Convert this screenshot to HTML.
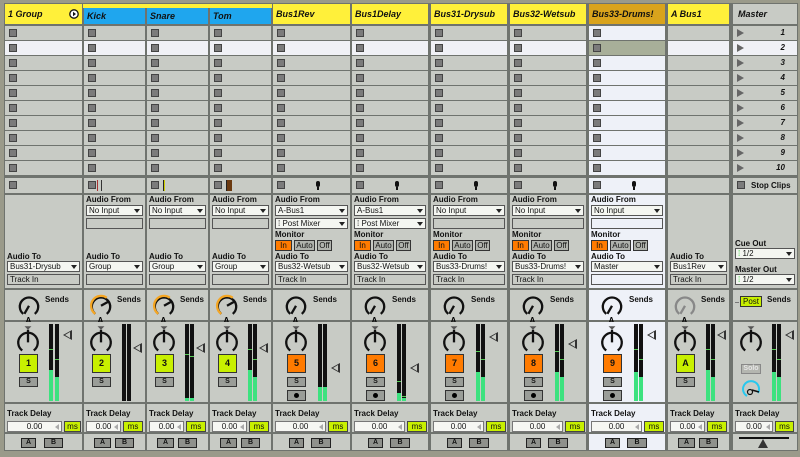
<!DOCTYPE html>
<html><head><meta charset="utf-8"><style>
*{margin:0;padding:0;box-sizing:border-box}
body{width:800px;height:457px;background:#9a9a8a;position:relative;overflow:hidden;font-family:"Liberation Sans",sans-serif;color:#111}
#bg{position:absolute;left:4px;top:3px;width:794px;height:448px;background:#6f736e}
.col{position:absolute;top:0;height:451px}
.s{position:absolute;left:0;right:0;background:#c8cbc5}
.lt .s,.lt .r{background:#eef1f8}
.hd{position:absolute;top:4px;left:0;right:0;height:20px;font:italic bold 9px/20px "Liberation Sans",sans-serif;padding-left:3px;background:#fff03a}
.clips{position:absolute;top:26px;left:0;right:0}
.r{height:14px;margin-bottom:1px;background:#c8cbc5;position:relative}
.r.w{background:#f0f1f6}
.q{position:absolute;left:4px;top:3px;width:8px;height:8px;background:#7b7b7b;border:1px solid #444}
.st{top:178px;height:15px}
.io{top:195px;height:93px}
.snd{top:290px;height:30px}
.mx{top:322px;height:80px}
.dl{top:404px;height:28px}
.ab{top:434px;height:16px}
.lb{position:absolute;left:2px;font:bold 8px/9px "Liberation Sans",sans-serif}
.dd{position:absolute;left:2px;right:2px;height:11px;background:#f4f6f1;border:1px solid #555;font:8px/9px "Liberation Sans",sans-serif;padding-left:2px;white-space:nowrap;overflow:hidden}
.dd:after{content:"";position:absolute;right:2px;top:3px;border:3px solid transparent;border-top:4px solid #222}
.bx{position:absolute;left:2px;right:2px;height:11px;border:1px solid #555;background:#c8cbc5;font:8px/9px "Liberation Sans",sans-serif;padding-left:2px}
.lt .bx{background:#eef1f8}
.mb{position:absolute;top:45px;height:11px;border:1px solid #333;background:#b0b3ad;font:8px/9px "Liberation Sans",sans-serif;text-align:center}
.mb.o{background:#ff7b00}
.kn{position:absolute;top:2px}
.snd svg.kn,.mx svg.kn{transform:scale(1.15);transform-origin:50% 0}
.sl{position:absolute;top:5px;font:bold 8px/9px "Liberation Sans",sans-serif}
.nb{position:absolute;top:32px;width:19px;height:19px;border:1px solid #333;font:bold 9px/17px "Liberation Sans",sans-serif;text-align:center;background:#c8f000}
.nb.o{background:#ff7b00}
.sb{position:absolute;top:55px;width:19px;height:10px;border:1px solid #333;background:#9a9d98;font:bold 7px/8px "Liberation Sans",sans-serif;text-align:center}
.rb{position:absolute;top:68px;width:19px;height:11px;border:1px solid #333;background:#9a9d98}
.rb:after{content:"";position:absolute;left:6px;top:2px;width:5px;height:5px;border-radius:50%;background:#000}
.m{position:absolute;top:2px;width:4px;height:77px;background:#111}
.m b{position:absolute;bottom:0;left:0;right:0;background:#3de27f}
.m i{position:absolute;left:0;right:0;height:1px;background:#5c5}
.tri{position:absolute;width:0;height:0;border-top:5px solid transparent;border-bottom:5px solid transparent;border-right:9px solid #333}
.tri:after{content:"";position:absolute;left:2px;top:-3px;border-top:3px solid transparent;border-bottom:3px solid transparent;border-right:5px solid #c8cbc5}
.lt .tri:after{border-right-color:#eef1f8}
.di{position:absolute;top:17px;left:2px;height:11px;background:#f6f7f3;border:1px solid #777;font:8px/9px "Liberation Sans",sans-serif;text-align:center}
.di:after{content:"";position:absolute;right:2px;top:2px;border-top:3px solid transparent;border-bottom:3px solid transparent;border-right:4px solid #aaa}
.ms{position:absolute;top:17px;height:11px;background:#c8f000;border:1px solid #444;font:8px/9px "Liberation Sans",sans-serif;text-align:center}
.a,.b{position:absolute;top:4px;height:10px;border:1px solid #222;background:#8f918c;font:bold 7px/8px "Liberation Sans",sans-serif;text-align:center}
.mic{position:absolute;top:3px;width:4px;height:6px;border-radius:2px;background:#111}
.mic:after{content:"";position:absolute;left:1px;top:6px;width:2px;height:3px;background:#111}
.mt{position:absolute;left:4px;top:3px;border-top:4px solid transparent;border-bottom:4px solid transparent;border-left:7px solid #666}
.mn{position:absolute;right:12px;top:0;font:italic bold 8px/14px "Liberation Sans",sans-serif}
</style></head><body>
<div id="bg"></div>
<div style="position:absolute;left:83px;top:4px;width:189px;height:4px;background:#fff03a"></div>

<div class="col" style="left:5px;width:77px">
<div class="hd">1 Group<svg style="position:absolute;right:3px;top:5px" width="10" height="10"><circle cx="5" cy="5" r="4.2" fill="#fff" stroke="#111" stroke-width="1.3"/><path d="M4 2.8L7 5 4 7.2z" fill="#111"/></svg></div>
<div class="clips"><div class="r"><i class="q"></i></div><div class="r w"><i class="q"></i></div><div class="r"><i class="q"></i></div><div class="r"><i class="q"></i></div><div class="r"><i class="q"></i></div><div class="r"><i class="q"></i></div><div class="r"><i class="q"></i></div><div class="r"><i class="q"></i></div><div class="r"><i class="q"></i></div><div class="r"><i class="q"></i></div></div>
<div class="s st"><i class="q"></i></div>
<div class="s io"><div class="lb" style="top:57px">Audio To</div><div class="dd" style="top:66px">Bus31-Drysub</div><div class="bx" style="top:79px">Track In</div></div>
<div class="s snd"><svg class="kn" style="left:12px" width="24" height="28"><path d="M7 19A8 8 0 1 1 17 19" fill="none" stroke="#111" stroke-width="2"/><line x1="12" y1="12" x2="8" y2="19" stroke="#111" stroke-width="2"/><text x="9" y="27" font-size="7" font-weight="bold" font-family="Liberation Sans">A</text></svg><div class="sl" style="left:40px">Sends</div></div>
<div class="s mx"><svg class="kn" style="left:12px" width="22" height="26"><path d="M8 2h6l-3 3z" fill="#555"/><path d="M6 23A8.5 8.5 0 1 1 16 23" fill="none" stroke="#111" stroke-width="2"/><line x1="11" y1="5" x2="11" y2="16" stroke="#111" stroke-width="2"/></svg>
<div class="nb" style="left:14px">1</div><div class="sb" style="left:14px">S</div>
<div class="m" style="left:44px"><i style="top:25px"></i><b style="height:31px"></b></div><div class="m" style="left:50px"><i style="top:35px"></i><b style="height:24px"></b></div><div class="tri" style="left:58px;top:8px"></div></div>
<div class="s dl"><div class="lb" style="top:5px">Track Delay</div><div class="di" style="width:55px">0.00</div><div class="ms" style="left:59px;width:17px">ms</div></div>
<div class="s ab"><div class="a" style="left:16px;width:15px">A</div><div class="b" style="left:39px;width:19px">B</div></div>
</div>

<div class="col" style="left:84px;width:61px">
<div class="hd" style="top:8px;height:16px;line-height:16px;background:#1fa6ee">Kick</div>
<div class="clips"><div class="r"><i class="q"></i></div><div class="r w"><i class="q"></i></div><div class="r"><i class="q"></i></div><div class="r"><i class="q"></i></div><div class="r"><i class="q"></i></div><div class="r"><i class="q"></i></div><div class="r"><i class="q"></i></div><div class="r"><i class="q"></i></div><div class="r"><i class="q"></i></div><div class="r"><i class="q"></i></div></div>
<div class="s st"><i class="q"></i><div style="position:absolute;left:13px;top:2px;width:5px;height:11px;border-left:1px solid #a33;border-right:1px solid #333"></div></div>
<div class="s io"><div class="lb" style="top:0">Audio From</div><div class="dd" style="top:10px">No Input</div><div class="bx" style="top:23px"></div><div class="lb" style="top:57px">Audio To</div><div class="dd" style="top:66px">Group</div><div class="bx" style="top:79px"></div></div>
<div class="s snd"><svg class="kn" style="left:5px" width="24" height="28"><path d="M7 19A8 8 0 1 1 17 19" fill="none" stroke="#111" stroke-width="2"/><path d="M7 19A8 8 0 0 1 17 5" fill="none" stroke="#f5a623" stroke-width="2"/><line x1="12" y1="12" x2="19" y2="8" stroke="#111" stroke-width="2"/><text x="9" y="27" font-size="7" font-weight="bold" font-family="Liberation Sans">A</text></svg><div class="sl" style="left:33px">Sends</div></div>
<div class="s mx"><svg class="kn" style="left:6px" width="22" height="26"><path d="M8 2h6l-3 3z" fill="#555"/><path d="M6 23A8.5 8.5 0 1 1 16 23" fill="none" stroke="#111" stroke-width="2"/><line x1="11" y1="5" x2="11" y2="16" stroke="#111" stroke-width="2"/></svg>
<div class="nb" style="left:8px">2</div><div class="sb" style="left:8px">S</div>
<div class="m" style="left:38px"></div><div class="m" style="left:43px"></div><div class="tri" style="left:49px;top:21px"></div></div>
<div class="s dl"><div class="lb" style="top:5px">Track Delay</div><div class="di" style="width:35px">0.00</div><div class="ms" style="left:39px;width:20px">ms</div></div>
<div class="s ab"><div class="a" style="left:10px;width:17px">A</div><div class="b" style="left:31px;width:19px">B</div></div>
</div>

<div class="col" style="left:147px;width:61px">
<div class="hd" style="top:8px;height:16px;line-height:16px;background:#1fa6ee">Snare</div>
<div class="clips"><div class="r"><i class="q"></i></div><div class="r w"><i class="q"></i></div><div class="r"><i class="q"></i></div><div class="r"><i class="q"></i></div><div class="r"><i class="q"></i></div><div class="r"><i class="q"></i></div><div class="r"><i class="q"></i></div><div class="r"><i class="q"></i></div><div class="r"><i class="q"></i></div><div class="r"><i class="q"></i></div></div>
<div class="s st"><i class="q"></i><div style="position:absolute;left:16px;top:2px;width:2px;height:11px;background:#222;border-right:1px solid #cc0"></div></div>
<div class="s io"><div class="lb" style="top:0">Audio From</div><div class="dd" style="top:10px">No Input</div><div class="bx" style="top:23px"></div><div class="lb" style="top:57px">Audio To</div><div class="dd" style="top:66px">Group</div><div class="bx" style="top:79px"></div></div>
<div class="s snd"><svg class="kn" style="left:5px" width="24" height="28"><path d="M7 19A8 8 0 1 1 17 19" fill="none" stroke="#111" stroke-width="2"/><path d="M7 19A8 8 0 0 1 17 5" fill="none" stroke="#f5a623" stroke-width="2"/><line x1="12" y1="12" x2="19" y2="8" stroke="#111" stroke-width="2"/><text x="9" y="27" font-size="7" font-weight="bold" font-family="Liberation Sans">A</text></svg><div class="sl" style="left:33px">Sends</div></div>
<div class="s mx"><svg class="kn" style="left:6px" width="22" height="26"><path d="M8 2h6l-3 3z" fill="#555"/><path d="M6 23A8.5 8.5 0 1 1 16 23" fill="none" stroke="#111" stroke-width="2"/><line x1="11" y1="5" x2="11" y2="16" stroke="#111" stroke-width="2"/></svg>
<div class="nb" style="left:8px">3</div><div class="sb" style="left:8px">S</div>
<div class="m" style="left:38px"><i style="top:30px"></i><b style="height:3px"></b></div><div class="m" style="left:43px"><i style="top:32px"></i><b style="height:3px"></b></div><div class="tri" style="left:49px;top:21px"></div></div>
<div class="s dl"><div class="lb" style="top:5px">Track Delay</div><div class="di" style="width:35px">0.00</div><div class="ms" style="left:39px;width:20px">ms</div></div>
<div class="s ab"><div class="a" style="left:10px;width:17px">A</div><div class="b" style="left:31px;width:19px">B</div></div>
</div>

<div class="col" style="left:210px;width:61px">
<div class="hd" style="top:8px;height:16px;line-height:16px;background:#1fa6ee">Tom</div>
<div class="clips"><div class="r"><i class="q"></i></div><div class="r w"><i class="q"></i></div><div class="r"><i class="q"></i></div><div class="r"><i class="q"></i></div><div class="r"><i class="q"></i></div><div class="r"><i class="q"></i></div><div class="r"><i class="q"></i></div><div class="r"><i class="q"></i></div><div class="r"><i class="q"></i></div><div class="r"><i class="q"></i></div></div>
<div class="s st"><i class="q"></i><div style="position:absolute;left:16px;top:2px;width:6px;height:11px;background:#6b3a10;border-left:1px solid #222"></div></div>
<div class="s io"><div class="lb" style="top:0">Audio From</div><div class="dd" style="top:10px">No Input</div><div class="bx" style="top:23px"></div><div class="lb" style="top:57px">Audio To</div><div class="dd" style="top:66px">Group</div><div class="bx" style="top:79px"></div></div>
<div class="s snd"><svg class="kn" style="left:5px" width="24" height="28"><path d="M7 19A8 8 0 1 1 17 19" fill="none" stroke="#111" stroke-width="2"/><path d="M7 19A8 8 0 0 1 17 5" fill="none" stroke="#f5a623" stroke-width="2"/><line x1="12" y1="12" x2="19" y2="8" stroke="#111" stroke-width="2"/><text x="9" y="27" font-size="7" font-weight="bold" font-family="Liberation Sans">A</text></svg><div class="sl" style="left:33px">Sends</div></div>
<div class="s mx"><svg class="kn" style="left:6px" width="22" height="26"><path d="M8 2h6l-3 3z" fill="#555"/><path d="M6 23A8.5 8.5 0 1 1 16 23" fill="none" stroke="#111" stroke-width="2"/><line x1="11" y1="5" x2="11" y2="16" stroke="#111" stroke-width="2"/></svg>
<div class="nb" style="left:8px">4</div><div class="sb" style="left:8px">S</div>
<div class="m" style="left:38px"><i style="top:25px"></i><b style="height:31px"></b></div><div class="m" style="left:43px"><i style="top:35px"></i><b style="height:24px"></b></div><div class="tri" style="left:49px;top:21px"></div></div>
<div class="s dl"><div class="lb" style="top:5px">Track Delay</div><div class="di" style="width:35px">0.00</div><div class="ms" style="left:39px;width:20px">ms</div></div>
<div class="s ab"><div class="a" style="left:10px;width:17px">A</div><div class="b" style="left:31px;width:19px">B</div></div>
</div>

<div class="col" style="left:273px;width:77px">
<div class="hd">Bus1Rev</div>
<div class="clips"><div class="r"><i class="q"></i></div><div class="r w"><i class="q"></i></div><div class="r"><i class="q"></i></div><div class="r"><i class="q"></i></div><div class="r"><i class="q"></i></div><div class="r"><i class="q"></i></div><div class="r"><i class="q"></i></div><div class="r"><i class="q"></i></div><div class="r"><i class="q"></i></div><div class="r"><i class="q"></i></div></div>
<div class="s st"><i class="q"></i><i class="mic" style="left:43px"></i></div>
<div class="s io"><div class="lb" style="top:0">Audio From</div><div class="dd" style="top:10px">A-Bus1</div><div class="dd" style="top:23px">⁞ Post Mixer</div><div class="lb" style="top:35px">Monitor</div><div class="mb o" style="left:2px;width:17px">In</div><div class="mb" style="left:21px;width:21px">Auto</div><div class="mb" style="left:44px;width:15px">Off</div><div class="lb" style="top:57px">Audio To</div><div class="dd" style="top:66px">Bus32-Wetsub</div><div class="bx" style="top:79px">Track In</div></div>
<div class="s snd"><svg class="kn" style="left:11px" width="24" height="28"><path d="M7 19A8 8 0 1 1 17 19" fill="none" stroke="#111" stroke-width="2"/><line x1="12" y1="12" x2="8" y2="19" stroke="#111" stroke-width="2"/><text x="9" y="27" font-size="7" font-weight="bold" font-family="Liberation Sans">A</text></svg><div class="sl" style="left:40px">Sends</div></div>
<div class="s mx"><svg class="kn" style="left:12px" width="22" height="26"><path d="M8 2h6l-3 3z" fill="#555"/><path d="M6 23A8.5 8.5 0 1 1 16 23" fill="none" stroke="#111" stroke-width="2"/><line x1="11" y1="5" x2="11" y2="16" stroke="#111" stroke-width="2"/></svg>
<div class="nb o" style="left:14px">5</div><div class="sb" style="left:14px">S</div><div class="rb" style="left:14px"></div>
<div class="m" style="left:45px"><b style="height:14px"></b></div><div class="m" style="left:50px"><b style="height:14px"></b></div><div class="tri" style="left:58px;top:41px"></div></div>
<div class="s dl"><div class="lb" style="top:5px">Track Delay</div><div class="di" style="width:51px">0.00</div><div class="ms" style="left:55px;width:20px">ms</div></div>
<div class="s ab"><div class="a" style="left:16px;width:15px">A</div><div class="b" style="left:38px;width:20px">B</div></div>
</div>

<div class="col" style="left:352px;width:76px">
<div class="hd">Bus1Delay</div>
<div class="clips"><div class="r"><i class="q"></i></div><div class="r w"><i class="q"></i></div><div class="r"><i class="q"></i></div><div class="r"><i class="q"></i></div><div class="r"><i class="q"></i></div><div class="r"><i class="q"></i></div><div class="r"><i class="q"></i></div><div class="r"><i class="q"></i></div><div class="r"><i class="q"></i></div><div class="r"><i class="q"></i></div></div>
<div class="s st"><i class="q"></i><i class="mic" style="left:43px"></i></div>
<div class="s io"><div class="lb" style="top:0">Audio From</div><div class="dd" style="top:10px">A-Bus1</div><div class="dd" style="top:23px">⁞ Post Mixer</div><div class="lb" style="top:35px">Monitor</div><div class="mb o" style="left:2px;width:17px">In</div><div class="mb" style="left:21px;width:21px">Auto</div><div class="mb" style="left:44px;width:15px">Off</div><div class="lb" style="top:57px">Audio To</div><div class="dd" style="top:66px">Bus32-Wetsub</div><div class="bx" style="top:79px">Track In</div></div>
<div class="s snd"><svg class="kn" style="left:11px" width="24" height="28"><path d="M7 19A8 8 0 1 1 17 19" fill="none" stroke="#111" stroke-width="2"/><line x1="12" y1="12" x2="8" y2="19" stroke="#111" stroke-width="2"/><text x="9" y="27" font-size="7" font-weight="bold" font-family="Liberation Sans">A</text></svg><div class="sl" style="left:40px">Sends</div></div>
<div class="s mx"><svg class="kn" style="left:12px" width="22" height="26"><path d="M8 2h6l-3 3z" fill="#555"/><path d="M6 23A8.5 8.5 0 1 1 16 23" fill="none" stroke="#111" stroke-width="2"/><line x1="11" y1="5" x2="11" y2="16" stroke="#111" stroke-width="2"/></svg>
<div class="nb o" style="left:14px">6</div><div class="sb" style="left:14px">S</div><div class="rb" style="left:14px"></div>
<div class="m" style="left:45px"><i style="top:57px"></i><b style="height:8px"></b></div><div class="m" style="left:50px"><i style="top:72px"></i><b style="height:3px"></b></div><div class="tri" style="left:58px;top:41px"></div></div>
<div class="s dl"><div class="lb" style="top:5px">Track Delay</div><div class="di" style="width:51px">0.00</div><div class="ms" style="left:55px;width:20px">ms</div></div>
<div class="s ab"><div class="a" style="left:16px;width:15px">A</div><div class="b" style="left:38px;width:20px">B</div></div>
</div>

<div class="col" style="left:431px;width:76px">
<div class="hd">Bus31-Drysub</div>
<div class="clips"><div class="r"><i class="q"></i></div><div class="r w"><i class="q"></i></div><div class="r"><i class="q"></i></div><div class="r"><i class="q"></i></div><div class="r"><i class="q"></i></div><div class="r"><i class="q"></i></div><div class="r"><i class="q"></i></div><div class="r"><i class="q"></i></div><div class="r"><i class="q"></i></div><div class="r"><i class="q"></i></div></div>
<div class="s st"><i class="q"></i><i class="mic" style="left:43px"></i></div>
<div class="s io"><div class="lb" style="top:0">Audio From</div><div class="dd" style="top:10px">No Input</div><div class="bx" style="top:23px"></div><div class="lb" style="top:35px">Monitor</div><div class="mb o" style="left:2px;width:17px">In</div><div class="mb" style="left:21px;width:21px">Auto</div><div class="mb" style="left:44px;width:15px">Off</div><div class="lb" style="top:57px">Audio To</div><div class="dd" style="top:66px">Bus33-Drums!</div><div class="bx" style="top:79px">Track In</div></div>
<div class="s snd"><svg class="kn" style="left:11px" width="24" height="28"><path d="M7 19A8 8 0 1 1 17 19" fill="none" stroke="#111" stroke-width="2"/><line x1="12" y1="12" x2="8" y2="19" stroke="#111" stroke-width="2"/><text x="9" y="27" font-size="7" font-weight="bold" font-family="Liberation Sans">A</text></svg><div class="sl" style="left:40px">Sends</div></div>
<div class="s mx"><svg class="kn" style="left:12px" width="22" height="26"><path d="M8 2h6l-3 3z" fill="#555"/><path d="M6 23A8.5 8.5 0 1 1 16 23" fill="none" stroke="#111" stroke-width="2"/><line x1="11" y1="5" x2="11" y2="16" stroke="#111" stroke-width="2"/></svg>
<div class="nb o" style="left:14px">7</div><div class="sb" style="left:14px">S</div><div class="rb" style="left:14px"></div>
<div class="m" style="left:45px"><i style="top:27px"></i><b style="height:29px"></b></div><div class="m" style="left:50px"><i style="top:35px"></i><b style="height:24px"></b></div><div class="tri" style="left:58px;top:10px"></div></div>
<div class="s dl"><div class="lb" style="top:5px">Track Delay</div><div class="di" style="width:51px">0.00</div><div class="ms" style="left:55px;width:20px">ms</div></div>
<div class="s ab"><div class="a" style="left:16px;width:15px">A</div><div class="b" style="left:38px;width:20px">B</div></div>
</div>

<div class="col" style="left:510px;width:76px">
<div class="hd">Bus32-Wetsub</div>
<div class="clips"><div class="r"><i class="q"></i></div><div class="r w"><i class="q"></i></div><div class="r"><i class="q"></i></div><div class="r"><i class="q"></i></div><div class="r"><i class="q"></i></div><div class="r"><i class="q"></i></div><div class="r"><i class="q"></i></div><div class="r"><i class="q"></i></div><div class="r"><i class="q"></i></div><div class="r"><i class="q"></i></div></div>
<div class="s st"><i class="q"></i><i class="mic" style="left:43px"></i></div>
<div class="s io"><div class="lb" style="top:0">Audio From</div><div class="dd" style="top:10px">No Input</div><div class="bx" style="top:23px"></div><div class="lb" style="top:35px">Monitor</div><div class="mb o" style="left:2px;width:17px">In</div><div class="mb" style="left:21px;width:21px">Auto</div><div class="mb" style="left:44px;width:15px">Off</div><div class="lb" style="top:57px">Audio To</div><div class="dd" style="top:66px">Bus33-Drums!</div><div class="bx" style="top:79px">Track In</div></div>
<div class="s snd"><svg class="kn" style="left:11px" width="24" height="28"><path d="M7 19A8 8 0 1 1 17 19" fill="none" stroke="#111" stroke-width="2"/><line x1="12" y1="12" x2="8" y2="19" stroke="#111" stroke-width="2"/><text x="9" y="27" font-size="7" font-weight="bold" font-family="Liberation Sans">A</text></svg><div class="sl" style="left:40px">Sends</div></div>
<div class="s mx"><svg class="kn" style="left:12px" width="22" height="26"><path d="M8 2h6l-3 3z" fill="#555"/><path d="M6 23A8.5 8.5 0 1 1 16 23" fill="none" stroke="#111" stroke-width="2"/><line x1="11" y1="5" x2="11" y2="16" stroke="#111" stroke-width="2"/></svg>
<div class="nb o" style="left:14px">8</div><div class="sb" style="left:14px">S</div><div class="rb" style="left:14px"></div>
<div class="m" style="left:45px"><i style="top:27px"></i><b style="height:29px"></b></div><div class="m" style="left:50px"><i style="top:35px"></i><b style="height:24px"></b></div><div class="tri" style="left:58px;top:17px"></div></div>
<div class="s dl"><div class="lb" style="top:5px">Track Delay</div><div class="di" style="width:51px">0.00</div><div class="ms" style="left:55px;width:20px">ms</div></div>
<div class="s ab"><div class="a" style="left:16px;width:15px">A</div><div class="b" style="left:38px;width:20px">B</div></div>
</div>

<div class="col lt" style="left:589px;width:76px">
<div class="hd" style="background:#d9a31c">Bus33-Drums!</div>
<div class="clips"><div class="r"><i class="q"></i></div><div class="r" style="background:#a8af99"><i class="q"></i></div><div class="r"><i class="q"></i></div><div class="r"><i class="q"></i></div><div class="r"><i class="q"></i></div><div class="r"><i class="q"></i></div><div class="r"><i class="q"></i></div><div class="r"><i class="q"></i></div><div class="r"><i class="q"></i></div><div class="r"><i class="q"></i></div></div>
<div class="s st"><i class="q"></i><i class="mic" style="left:43px"></i></div>
<div class="s io"><div class="lb" style="top:0">Audio From</div><div class="dd" style="top:10px">No Input</div><div class="bx" style="top:23px"></div><div class="lb" style="top:35px">Monitor</div><div class="mb o" style="left:2px;width:17px">In</div><div class="mb" style="left:21px;width:21px">Auto</div><div class="mb" style="left:44px;width:15px">Off</div><div class="lb" style="top:57px">Audio To</div><div class="dd" style="top:66px">Master</div><div class="bx" style="top:79px"></div></div>
<div class="s snd"><svg class="kn" style="left:11px" width="24" height="28"><path d="M7 19A8 8 0 1 1 17 19" fill="none" stroke="#111" stroke-width="2"/><line x1="12" y1="12" x2="8" y2="19" stroke="#111" stroke-width="2"/><text x="9" y="27" font-size="7" font-weight="bold" font-family="Liberation Sans">A</text></svg><div class="sl" style="left:40px">Sends</div></div>
<div class="s mx"><svg class="kn" style="left:12px" width="22" height="26"><path d="M8 2h6l-3 3z" fill="#555"/><path d="M6 23A8.5 8.5 0 1 1 16 23" fill="none" stroke="#111" stroke-width="2"/><line x1="11" y1="5" x2="11" y2="16" stroke="#111" stroke-width="2"/></svg>
<div class="nb o" style="left:14px">9</div><div class="sb" style="left:14px">S</div><div class="rb" style="left:14px"></div>
<div class="m" style="left:45px"><i style="top:25px"></i><b style="height:29px"></b></div><div class="m" style="left:50px"><i style="top:35px"></i><b style="height:24px"></b></div><div class="tri" style="left:58px;top:8px"></div></div>
<div class="s dl"><div class="lb" style="top:5px">Track Delay</div><div class="di" style="width:51px">0.00</div><div class="ms" style="left:55px;width:20px">ms</div></div>
<div class="s ab"><div class="a" style="left:16px;width:15px">A</div><div class="b" style="left:38px;width:20px">B</div></div>
</div>

<div class="col" style="left:668px;width:61px">
<div class="hd">A Bus1</div>
<div class="clips"><div class="r"></div><div class="r w"></div><div class="r"></div><div class="r"></div><div class="r"></div><div class="r"></div><div class="r"></div><div class="r"></div><div class="r"></div><div class="r"></div></div>
<div class="s st"></div>
<div class="s io"><div class="lb" style="top:57px">Audio To</div><div class="dd" style="top:66px">Bus1Rev</div><div class="bx" style="top:79px">Track In</div></div>
<div class="s snd"><svg class="kn" style="left:5px" width="24" height="28"><path d="M7 19A8 8 0 1 1 17 19" fill="none" stroke="#888" stroke-width="2"/><line x1="12" y1="12" x2="8" y2="19" stroke="#888" stroke-width="2"/><text x="9" y="27" font-size="7" font-weight="bold" font-family="Liberation Sans">A</text></svg><div class="sl" style="left:33px">Sends</div></div>
<div class="s mx"><svg class="kn" style="left:6px" width="22" height="26"><path d="M8 2h6l-3 3z" fill="#555"/><path d="M6 23A8.5 8.5 0 1 1 16 23" fill="none" stroke="#111" stroke-width="2"/><line x1="11" y1="5" x2="11" y2="16" stroke="#111" stroke-width="2"/></svg>
<div class="nb" style="left:8px">A</div><div class="sb" style="left:8px">S</div>
<div class="m" style="left:38px"><i style="top:25px"></i><b style="height:31px"></b></div><div class="m" style="left:43px"><i style="top:35px"></i><b style="height:24px"></b></div><div class="tri" style="left:49px;top:8px"></div></div>
<div class="s dl"><div class="lb" style="top:5px">Track Delay</div><div class="di" style="width:35px">0.00</div><div class="ms" style="left:39px;width:20px">ms</div></div>
<div class="s ab"><div class="a" style="left:10px;width:17px">A</div><div class="b" style="left:31px;width:19px">B</div></div>
</div>

<div class="col" style="left:733px;width:64px">
<div class="hd" style="background:#c8cbc5;padding-left:5px">Master</div>
<div class="clips"><div class="r"><i class="mt"></i><span class="mn">1</span></div><div class="r w"><i class="mt"></i><span class="mn">2</span></div><div class="r"><i class="mt"></i><span class="mn">3</span></div><div class="r"><i class="mt"></i><span class="mn">4</span></div><div class="r"><i class="mt"></i><span class="mn">5</span></div><div class="r"><i class="mt"></i><span class="mn">6</span></div><div class="r"><i class="mt"></i><span class="mn">7</span></div><div class="r"><i class="mt"></i><span class="mn">8</span></div><div class="r"><i class="mt"></i><span class="mn">9</span></div><div class="r"><i class="mt"></i><span class="mn">10</span></div></div>
<div class="s st"><i class="q"></i><span style="position:absolute;left:18px;top:0;font:bold 8px/15px 'Liberation Sans',sans-serif">Stop Clips</span></div>
<div class="s io"><div class="lb" style="top:44px">Cue Out</div><div class="dd" style="top:53px"><span style="color:#3c3">⁞</span> 1/2</div><div class="lb" style="top:70px">Master Out</div><div class="dd" style="top:79px"><span style="color:#3c3">⁞</span> 1/2</div></div>
<div class="s snd"><div style="position:absolute;left:2px;top:12px;width:4px;height:1px;background:#777"></div><div style="position:absolute;left:7px;top:6px;width:22px;height:11px;background:#c8f000;border:1px solid #333;font:8px/9px 'Liberation Sans',sans-serif;text-align:center">Post</div><div class="sl" style="left:34px">Sends</div></div>
<div class="s mx"><svg class="kn" style="left:7px" width="22" height="26"><path d="M8 2h6l-3 3z" fill="#555"/><path d="M6 23A8.5 8.5 0 1 1 16 23" fill="none" stroke="#111" stroke-width="2"/><line x1="11" y1="5" x2="11" y2="16" stroke="#111" stroke-width="2"/></svg>
<div style="position:absolute;left:8px;top:42px;width:20px;height:10px;border:1px solid #888;background:#b4b6b0;color:#e6e6e6;font:bold 7px/8px 'Liberation Sans',sans-serif;text-align:center">Solo</div>
<svg style="position:absolute;left:6px;top:54px" width="24" height="24"><path d="M8 20A8 8 0 1 1 19 17" fill="none" stroke="#28c8ee" stroke-width="2"/><line x1="13" y1="14" x2="20" y2="16" stroke="#111" stroke-width="1.5"/><circle cx="11" cy="16" r="2.5" fill="none" stroke="#111" stroke-width="1.2"/></svg>
<div class="m" style="left:39px"><i style="top:25px"></i><b style="height:29px"></b></div><div class="m" style="left:44px"><i style="top:35px"></i><b style="height:24px"></b></div><div class="tri" style="left:52px;top:8px"></div></div>
<div class="s dl"><div class="lb" style="top:5px">Track Delay</div><div class="di" style="width:38px">0.00</div><div class="ms" style="left:42px;width:19px">ms</div></div>
<div class="s ab"><div style="position:absolute;left:6px;top:3px;width:50px;height:2px;background:#111"></div><div style="position:absolute;left:25px;top:5px;border-left:5px solid transparent;border-right:5px solid transparent;border-bottom:9px solid #333"></div></div>
</div>
</body></html>
